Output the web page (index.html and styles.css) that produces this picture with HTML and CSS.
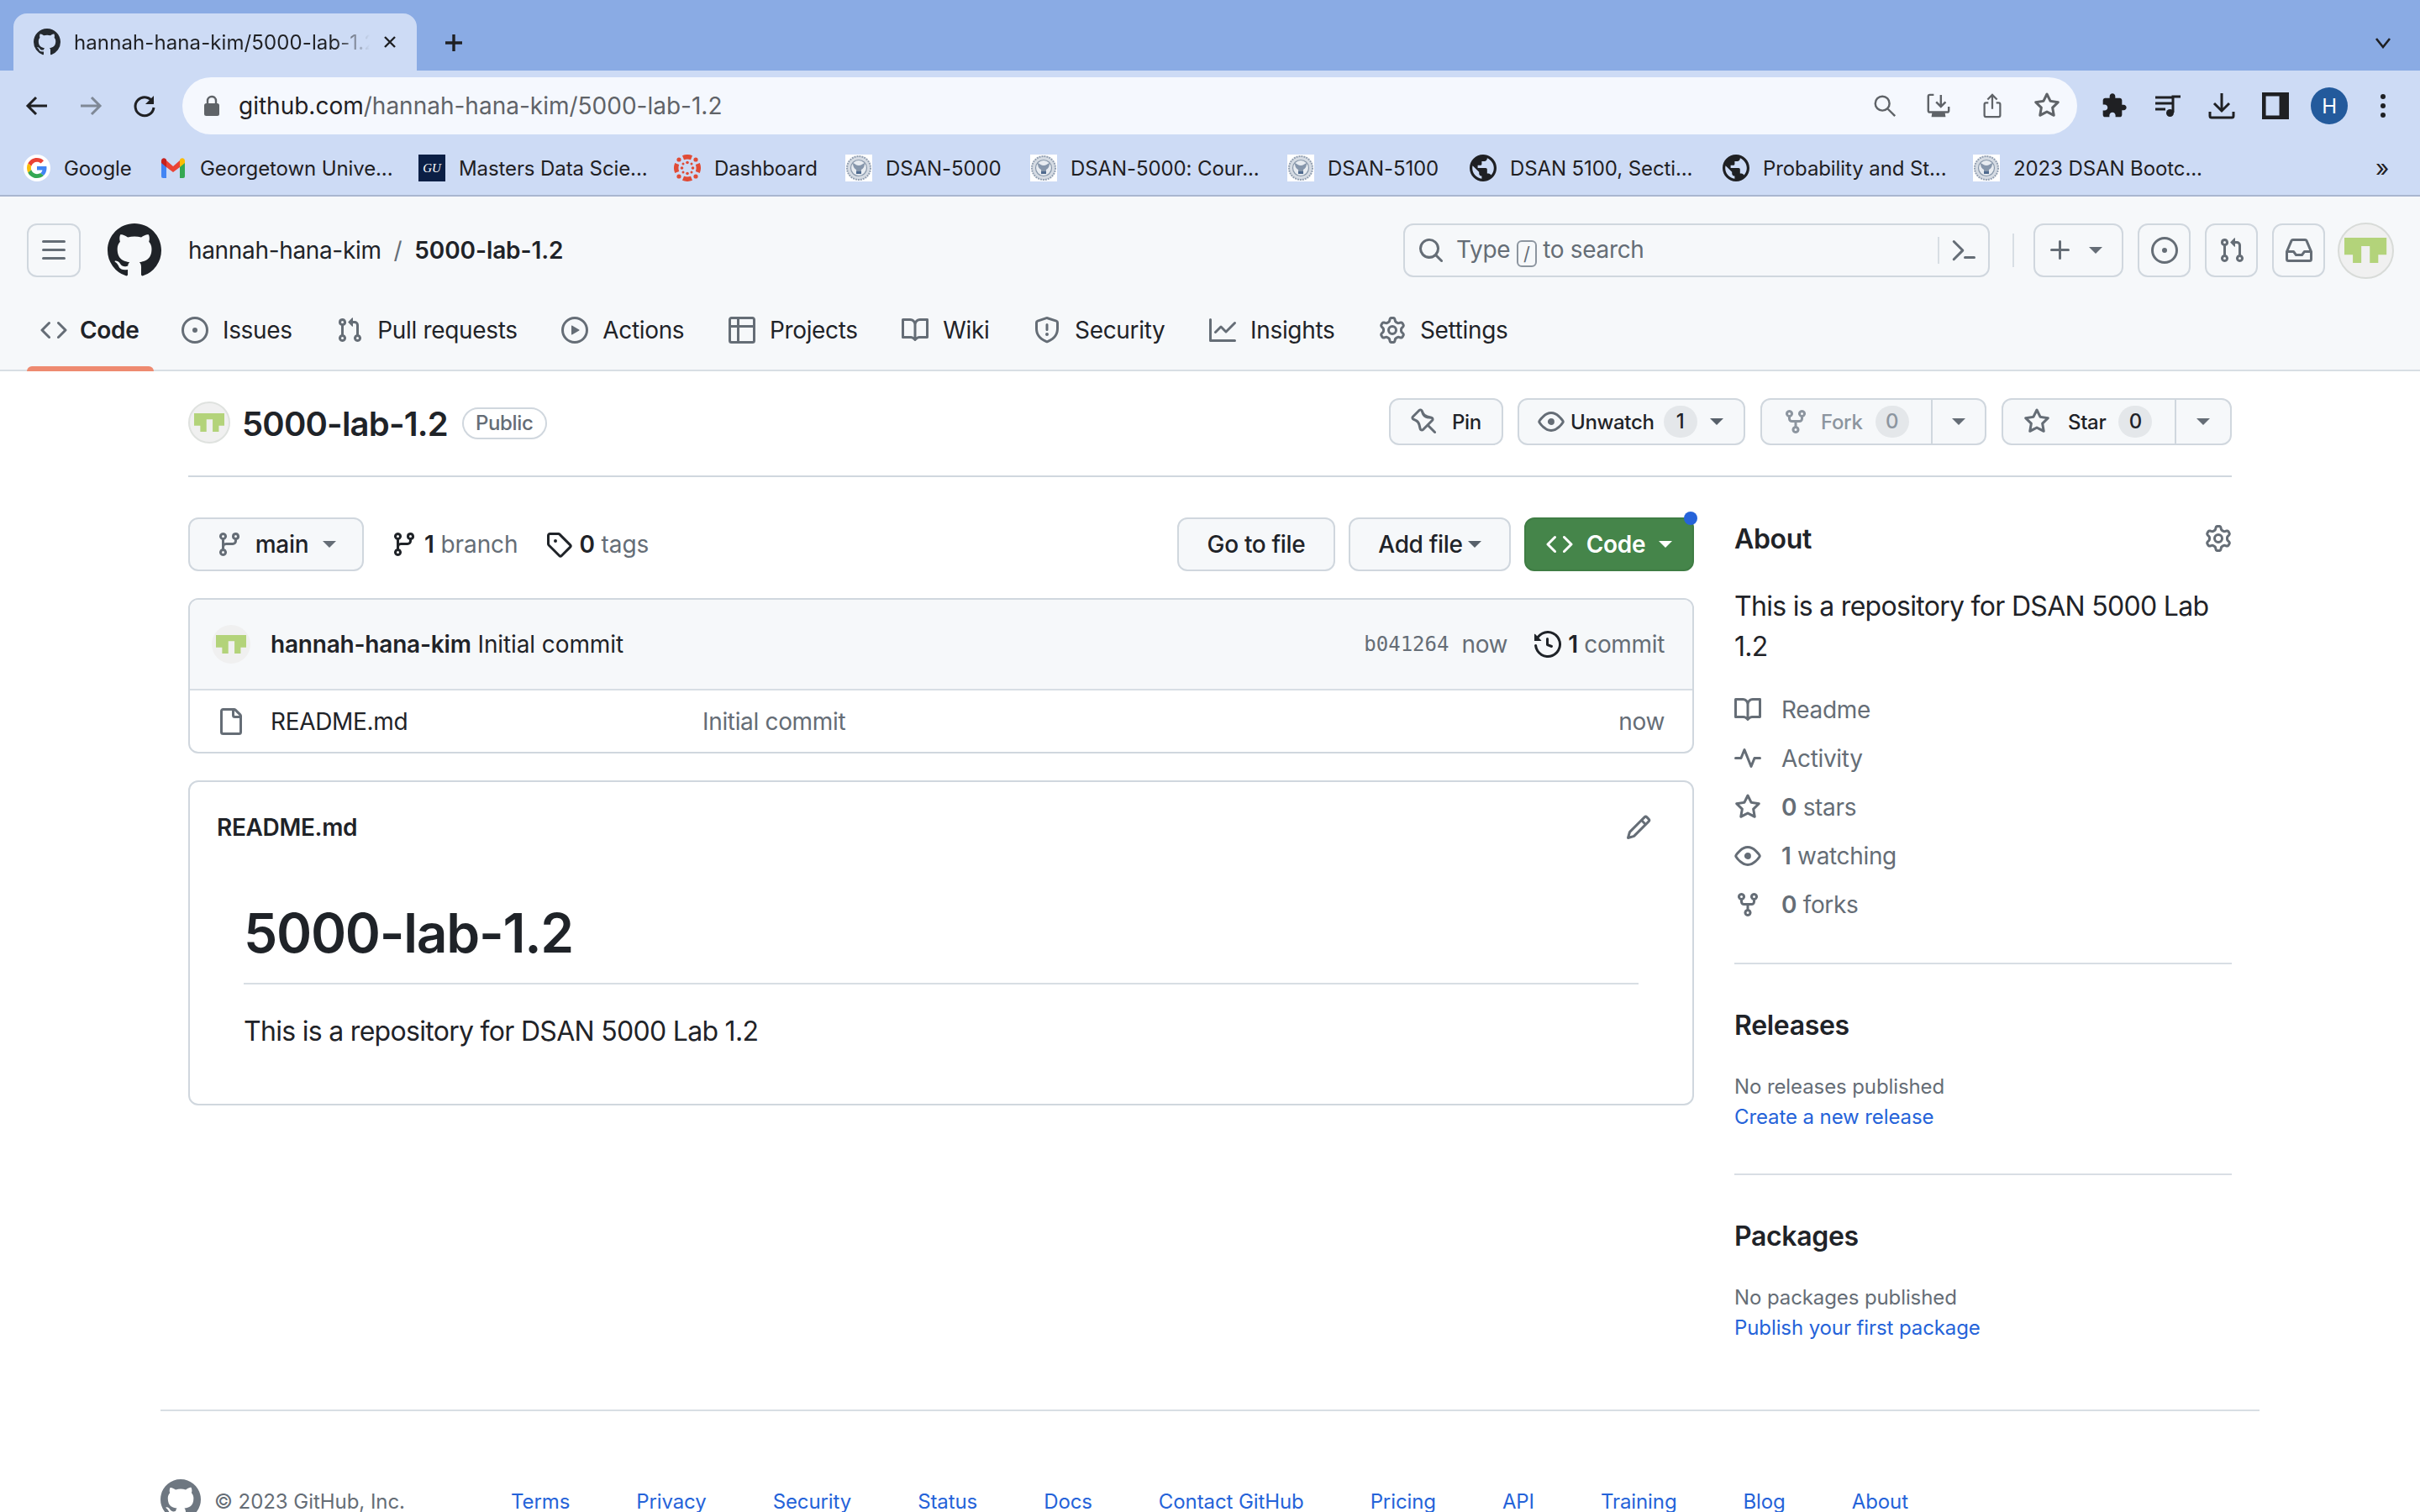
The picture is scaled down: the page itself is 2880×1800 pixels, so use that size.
FILE: index.html
```html
<!DOCTYPE html>
<html lang="en">
<head>
    <meta charset="UTF-8">
    <title>hannah-hana-kim/5000-lab-1.2</title>
    <link rel="stylesheet" href="styles.css">
</head>
<body>
    <svg class="sprite" xmlns="http://www.w3.org/2000/svg">
        <symbol id="i-mark" viewBox="0 0 16 16"><path d="M8 0c4.42 0 8 3.58 8 8a8.013 8.013 0 0 1-5.45 7.59c-.4.08-.55-.17-.55-.38 0-.27.01-1.13.01-2.2 0-.75-.25-1.23-.54-1.48 1.78-.2 3.65-.88 3.65-3.95 0-.88-.31-1.59-.82-2.15.08-.2.36-1.02-.08-2.12 0 0-.67-.22-2.2.82-.64-.18-1.32-.27-2-.27-.68 0-1.36.09-2 .27-1.53-1.03-2.2-.82-2.2-.82-.44 1.1-.16 1.92-.08 2.12-.51.56-.82 1.28-.82 2.15 0 3.06 1.86 3.75 3.64 3.95-.23.2-.44.55-.51 1.07-.46.21-1.61.55-2.33-.66-.15-.24-.6-.83-1.23-.82-.67.01-.27.38.01.53.34.19.73.9.82 1.13.16.45.68 1.31 2.69.94 0 .67.01 1.3.01 1.49 0 .21-.15.45-.55.38A7.995 7.995 0 0 1 0 8c0-4.42 3.58-8 8-8Z"/></symbol>
        <symbol id="i-bars" viewBox="0 0 16 16"><path d="M1 2.75A.75.75 0 0 1 1.75 2h12.5a.75.75 0 0 1 0 1.5H1.75A.75.75 0 0 1 1 2.75Zm0 5A.75.75 0 0 1 1.75 7h12.5a.75.75 0 0 1 0 1.5H1.75A.75.75 0 0 1 1 7.75ZM1.75 12h12.5a.75.75 0 0 1 0 1.5H1.75a.75.75 0 0 1 0-1.5Z"/></symbol>
        <symbol id="i-code" viewBox="0 0 16 16"><path d="m11.28 3.22 4.25 4.25a.75.75 0 0 1 0 1.06l-4.25 4.25a.749.749 0 0 1-1.275-.326.749.749 0 0 1 .215-.734L13.94 8l-3.72-3.72a.749.749 0 0 1 .326-1.275.749.749 0 0 1 .734.215Zm-6.56 0a.751.751 0 0 1 1.042.018.751.751 0 0 1 .018 1.042L2.06 8l3.72 3.72a.749.749 0 0 1-.326 1.275.749.749 0 0 1-.734-.215L.47 8.53a.75.75 0 0 1 0-1.06Z"/></symbol>
        <symbol id="i-issue" viewBox="0 0 16 16"><path d="M8 9.5a1.5 1.5 0 1 0 0-3 1.5 1.5 0 0 0 0 3Z"/><path d="M8 0a8 8 0 1 1 0 16A8 8 0 0 1 8 0ZM1.5 8a6.5 6.5 0 1 0 13 0 6.5 6.5 0 0 0-13 0Z"/></symbol>
        <symbol id="i-pr" viewBox="0 0 16 16"><path d="M1.5 3.25a2.25 2.25 0 1 1 3 2.122v5.256a2.251 2.251 0 1 1-1.5 0V5.372A2.25 2.25 0 0 1 1.5 3.25Zm5.677-.177L9.573.677A.25.25 0 0 1 10 .854V2.5h1A2.5 2.5 0 0 1 13.5 5v5.628a2.251 2.251 0 1 1-1.5 0V5a1 1 0 0 0-1-1h-1v1.646a.25.25 0 0 1-.427.177L7.177 3.427a.25.25 0 0 1 0-.354ZM3.75 2.5a.75.75 0 1 0 0 1.5.75.75 0 0 0 0-1.5Zm0 9.5a.75.75 0 1 0 0 1.5.75.75 0 0 0 0-1.5Zm8.25.75a.75.75 0 1 0 1.5 0 .75.75 0 0 0-1.5 0Z"/></symbol>
        <symbol id="i-play" viewBox="0 0 16 16"><path d="M8 0a8 8 0 1 1 0 16A8 8 0 0 1 8 0ZM1.5 8a6.5 6.5 0 1 0 13 0 6.5 6.5 0 0 0-13 0Zm4.879-2.773 4.264 2.559a.25.25 0 0 1 0 .428l-4.264 2.559A.25.25 0 0 1 6 10.559V5.442a.25.25 0 0 1 .379-.215Z"/></symbol>
        <symbol id="i-table" viewBox="0 0 16 16"><path d="M0 1.75C0 .784.784 0 1.75 0h12.5C15.216 0 16 .784 16 1.75v12.5A1.75 1.75 0 0 1 14.25 16H1.75A1.75 1.75 0 0 1 0 14.25ZM6.5 6.5v8h7.75a.25.25 0 0 0 .25-.25V6.5Zm8-1.5V1.75a.25.25 0 0 0-.25-.25H6.5V5Zm-13 1.5v7.75c0 .138.112.25.25.25H5v-8ZM5 5V1.5H1.75a.25.25 0 0 0-.25.25V5Z"/></symbol>
        <symbol id="i-book" viewBox="0 0 16 16"><path d="M0 1.75A.75.75 0 0 1 .75 1h4.253c1.227 0 2.317.59 3 1.501A3.743 3.743 0 0 1 11.006 1h4.245a.75.75 0 0 1 .75.75v10.5a.75.75 0 0 1-.75.75h-4.507a2.25 2.25 0 0 0-1.591.659l-.622.621a.75.75 0 0 1-1.06 0l-.622-.621A2.25 2.25 0 0 0 5.258 13H.75a.75.75 0 0 1-.75-.75Zm7.251 10.324.004-5.073-.002-2.253A2.25 2.25 0 0 0 5.003 2.5H1.5v9h3.757a3.75 3.75 0 0 1 1.994.574ZM8.755 4.75l-.004 7.322a3.752 3.752 0 0 1 1.992-.572H14.5v-9h-3.495a2.25 2.25 0 0 0-2.25 2.25Z"/></symbol>
        <symbol id="i-shield" viewBox="0 0 16 16"><path d="M7.467.133a1.748 1.748 0 0 1 1.066 0l5.25 1.68A1.75 1.75 0 0 1 15 3.48V7c0 1.566-.32 3.182-1.303 4.682-.983 1.498-2.585 2.813-5.032 3.855a1.697 1.697 0 0 1-1.33 0c-2.447-1.042-4.049-2.357-5.032-3.855C1.32 10.182 1 8.566 1 7V3.48a1.75 1.75 0 0 1 1.217-1.667Zm.61 1.429a.25.25 0 0 0-.153 0l-5.25 1.68a.25.25 0 0 0-.174.238V7c0 1.358.275 2.666 1.057 3.86.784 1.194 2.121 2.34 4.366 3.297a.196.196 0 0 0 .154 0c2.245-.956 3.582-2.104 4.366-3.298C13.225 9.666 13.5 8.36 13.5 7V3.48a.251.251 0 0 0-.174-.237l-5.25-1.68ZM8.75 4.75v3a.75.75 0 0 1-1.5 0v-3a.75.75 0 0 1 1.5 0ZM9 10.5a1 1 0 1 1-2 0 1 1 0 0 1 2 0Z"/></symbol>
        <symbol id="i-graph" viewBox="0 0 16 16"><path d="M1.5 1.75V13.5h13.75a.75.75 0 0 1 0 1.5H.75a.75.75 0 0 1-.75-.75V1.75a.75.75 0 0 1 1.5 0Zm14.28 2.53-5.25 5.25a.75.75 0 0 1-1.06 0L7 7.06 4.28 9.78a.751.751 0 0 1-1.042-.018.751.751 0 0 1-.018-1.042l3.25-3.25a.75.75 0 0 1 1.06 0L10 7.94l4.72-4.72a.751.751 0 0 1 1.042.018.751.751 0 0 1 .018 1.042Z"/></symbol>
        <symbol id="i-gear" viewBox="0 0 16 16"><path d="M8 0a8.2 8.2 0 0 1 .701.031C9.444.095 9.99.645 10.16 1.29l.288 1.107c.018.066.079.158.212.224.231.114.454.243.668.386.123.082.233.09.299.071l1.103-.303c.644-.176 1.392.021 1.82.63.27.385.506.792.704 1.218.315.675.111 1.422-.364 1.891l-.814.806c-.049.048-.098.147-.088.294.016.257.016.515 0 .772-.01.147.038.246.088.294l.814.806c.475.469.679 1.216.364 1.891a7.977 7.977 0 0 1-.704 1.217c-.428.61-1.176.807-1.82.63l-1.102-.302c-.067-.019-.177-.011-.3.071a5.909 5.909 0 0 1-.668.386c-.133.066-.194.158-.211.224l-.29 1.106c-.168.646-.715 1.196-1.458 1.26a8.006 8.006 0 0 1-1.402 0c-.743-.064-1.289-.614-1.458-1.26l-.289-1.106c-.018-.066-.079-.158-.212-.224a5.738 5.738 0 0 1-.668-.386c-.123-.082-.233-.09-.299-.071l-1.103.303c-.644.176-1.392-.021-1.82-.63a8.12 8.12 0 0 1-.704-1.218c-.315-.675-.111-1.422.363-1.891l.815-.806c.05-.048.098-.147.088-.294a6.214 6.214 0 0 1 0-.772c.01-.147-.038-.246-.088-.294l-.815-.806C.635 6.045.431 5.298.746 4.623a7.92 7.92 0 0 1 .704-1.217c.428-.61 1.176-.807 1.82-.63l1.102.302c.067.019.177.011.3-.071.214-.143.437-.272.668-.386.133-.066.194-.158.211-.224l.29-1.106C6.009.645 6.556.095 7.299.03 7.53.01 7.764 0 8 0Zm-.571 1.525c-.036.003-.108.036-.137.146l-.289 1.105c-.147.561-.549.967-.998 1.189-.173.086-.34.183-.5.29-.417.278-.97.423-1.529.27l-1.103-.303c-.109-.03-.175.016-.195.045-.22.312-.412.644-.573.99-.014.031-.021.11.059.19l.815.806c.411.406.562.957.53 1.456a4.709 4.709 0 0 0 0 .582c.032.499-.119 1.05-.53 1.456l-.815.806c-.081.08-.073.159-.059.19.162.346.353.677.573.989.02.03.085.076.195.046l1.102-.303c.56-.153 1.113-.008 1.53.27.161.107.328.204.501.29.447.222.85.629.997 1.189l.289 1.105c.029.109.101.143.137.146a6.6 6.6 0 0 0 1.142 0c.036-.003.108-.036.137-.146l.289-1.105c.147-.561.549-.967.998-1.189.173-.086.34-.183.5-.29.417-.278.97-.423 1.529-.27l1.103.303c.109.029.175-.016.195-.045.22-.313.411-.644.573-.99.014-.031.021-.11-.059-.19l-.815-.806c-.411-.406-.562-.957-.53-1.456a4.709 4.709 0 0 0 0-.582c-.032-.499.119-1.05.53-1.456l.815-.806c.081-.08.073-.159.059-.19a6.464 6.464 0 0 0-.573-.989c-.02-.03-.085-.076-.195-.046l-1.102.303c-.56.153-1.113.008-1.53-.27a4.44 4.44 0 0 0-.501-.29c-.447-.222-.85-.629-.997-1.189l-.289-1.105c-.029-.11-.101-.143-.137-.146a6.6 6.6 0 0 0-1.142 0ZM11 8a3 3 0 1 1-6 0 3 3 0 0 1 6 0ZM9.5 8a1.5 1.5 0 1 0-3.001.001A1.5 1.5 0 0 0 9.5 8Z"/></symbol>
        <symbol id="i-search" viewBox="0 0 16 16"><path d="M10.68 11.74a6 6 0 0 1-7.922-8.982 6 6 0 0 1 8.982 7.922l3.04 3.04a.749.749 0 0 1-.326 1.275.749.749 0 0 1-.734-.215ZM11.5 7a4.499 4.499 0 1 0-8.997 0A4.499 4.499 0 0 0 11.5 7Z"/></symbol>
        <symbol id="i-term" viewBox="0 0 16 16"><path d="m6.354 8.04-4.773 4.773a.75.75 0 1 0 1.061 1.06L7.945 8.57a.75.75 0 0 0 0-1.06L2.642 2.206a.75.75 0 0 0-1.06 1.061L6.353 8.04ZM8.75 11.5a.75.75 0 0 0 0 1.5h5.5a.75.75 0 0 0 0-1.5h-5.5Z"/></symbol>
        <symbol id="i-plus" viewBox="0 0 16 16"><path d="M7.75 2a.75.75 0 0 1 .75.75V7h4.25a.75.75 0 0 1 0 1.5H8.5v4.25a.75.75 0 0 1-1.5 0V8.5H2.75a.75.75 0 0 1 0-1.5H7V2.75A.75.75 0 0 1 7.75 2Z"/></symbol>
        <symbol id="i-inbox" viewBox="0 0 16 16"><path d="M2.8 2.06A1.75 1.75 0 0 1 4.41 1h7.18c.7 0 1.333.417 1.61 1.06l2.74 6.395c.04.093.06.194.06.295v4.5A1.75 1.75 0 0 1 14.25 15H1.75A1.75 1.75 0 0 1 0 13.25v-4.5c0-.101.02-.202.06-.295Zm1.61.44a.25.25 0 0 0-.23.152L1.887 8H4.75a.75.75 0 0 1 .6.3L6.625 10h2.75l1.275-1.7a.75.75 0 0 1 .6-.3h2.863L11.82 2.652a.25.25 0 0 0-.23-.152Zm10.09 7h-2.875l-1.275 1.7a.75.75 0 0 1-.6.3h-3.5a.75.75 0 0 1-.6-.3L4.375 9.5H1.5v3.75c0 .138.112.25.25.25h12.5a.25.25 0 0 0 .25-.25Z"/></symbol>
        <symbol id="i-pin" viewBox="0 0 16 16"><path d="M4.456.734a1.75 1.75 0 0 1 2.826.504l.613 1.327a3.081 3.081 0 0 0 2.084 1.707l2.454.584c1.332.317 1.8 1.972.832 2.94L11.06 10l3.72 3.72a.748.748 0 0 1-.332 1.265.75.75 0 0 1-.728-.205L10 11.06l-2.204 2.205c-.968.968-2.623.5-2.94-.832l-.584-2.454a3.081 3.081 0 0 0-1.707-2.084l-1.327-.613a1.75 1.75 0 0 1-.504-2.826L4.456.734ZM5.92 1.866a.25.25 0 0 0-.404-.072L1.794 5.516a.25.25 0 0 0 .072.404l1.328.613A4.582 4.582 0 0 1 5.73 9.63l.584 2.454a.25.25 0 0 0 .42.12l5.47-5.47a.25.25 0 0 0-.12-.42L9.63 6.13a4.583 4.583 0 0 1-3.098-2.537L5.92 1.866Z"/></symbol>
        <symbol id="i-eye" viewBox="0 0 16 16"><path d="M8 2c1.981 0 3.671.992 4.933 2.078 1.27 1.091 2.187 2.345 2.637 3.023a1.62 1.62 0 0 1 0 1.798c-.45.678-1.367 1.932-2.637 3.023C11.67 13.008 9.981 14 8 14c-1.981 0-3.671-.992-4.933-2.078C1.797 10.83.88 9.576.43 8.898a1.62 1.62 0 0 1 0-1.798c.45-.677 1.367-1.931 2.637-3.022C4.33 2.992 6.019 2 8 2ZM1.679 7.932a.12.12 0 0 0 0 .136c.411.622 1.241 1.75 2.366 2.717C5.176 11.758 6.527 12.5 8 12.5c1.473 0 2.825-.742 3.955-1.715 1.124-.967 1.954-2.096 2.366-2.717a.12.12 0 0 0 0-.136c-.412-.621-1.242-1.75-2.366-2.717C10.824 4.242 9.473 3.5 8 3.5c-1.473 0-2.825.742-3.955 1.715-1.124.967-1.954 2.096-2.366 2.717ZM8 10a2 2 0 1 1-.001-3.999A2 2 0 0 1 8 10Z"/></symbol>
        <symbol id="i-fork" viewBox="0 0 16 16"><path d="M5 5.372v.878c0 .414.336.75.75.75h4.5a.75.75 0 0 0 .75-.75v-.878a2.25 2.25 0 1 1 1.5 0v.878a2.25 2.25 0 0 1-2.25 2.25h-1.5v2.128a2.251 2.251 0 1 1-1.5 0V8.5h-1.5A2.25 2.25 0 0 1 3.5 6.25v-.878a2.25 2.25 0 1 1 1.5 0ZM5 3.25a.75.75 0 1 0-1.5 0 .75.75 0 0 0 1.5 0Zm6.75.75a.75.75 0 1 0 0-1.5.75.75 0 0 0 0 1.5Zm-3 8.75a.75.75 0 1 0-1.5 0 .75.75 0 0 0 1.5 0Z"/></symbol>
        <symbol id="i-star" viewBox="0 0 16 16"><path d="M8 .25a.75.75 0 0 1 .673.418l1.882 3.815 4.21.612a.75.75 0 0 1 .416 1.279l-3.046 2.97.719 4.192a.751.751 0 0 1-1.088.791L8 12.347l-3.766 1.98a.75.75 0 0 1-1.088-.79l.72-4.194L.818 6.374a.75.75 0 0 1 .416-1.28l4.21-.611L7.327.668A.75.75 0 0 1 8 .25Zm0 2.445L6.615 5.5a.75.75 0 0 1-.564.41l-3.097.45 2.24 2.184a.75.75 0 0 1 .216.664l-.528 3.084 2.769-1.456a.75.75 0 0 1 .698 0l2.77 1.456-.53-3.084a.75.75 0 0 1 .216-.664l2.24-2.183-3.096-.45a.75.75 0 0 1-.564-.41L8 2.694Z"/></symbol>
        <symbol id="i-branch" viewBox="0 0 16 16"><path d="M9.5 3.25a2.25 2.25 0 1 1 3 2.122V6A2.5 2.5 0 0 1 10 8.5H6a1 1 0 0 0-1 1v1.128a2.251 2.251 0 1 1-1.5 0V5.372a2.25 2.25 0 1 1 1.5 0v1.836A2.493 2.493 0 0 1 6 7h4a1 1 0 0 0 1-1v-.628A2.25 2.25 0 0 1 9.5 3.25Zm-6 0a.75.75 0 1 0 1.5 0 .75.75 0 0 0-1.5 0Zm8.25-.75a.75.75 0 1 0 0 1.5.75.75 0 0 0 0-1.5ZM4.25 12a.75.75 0 1 0 0 1.5.75.75 0 0 0 0-1.5Z"/></symbol>
        <symbol id="i-tag" viewBox="0 0 16 16"><path d="M1 7.775V2.75C1 1.784 1.784 1 2.75 1h5.025c.464 0 .91.184 1.238.513l6.25 6.25a1.75 1.75 0 0 1 0 2.474l-5.026 5.026a1.75 1.75 0 0 1-2.474 0l-6.25-6.25A1.752 1.752 0 0 1 1 7.775Zm1.5 0c0 .066.026.13.073.177l6.25 6.25a.25.25 0 0 0 .354 0l5.025-5.025a.25.25 0 0 0 0-.354l-6.25-6.25a.25.25 0 0 0-.177-.073H2.75a.25.25 0 0 0-.25.25ZM6 5a1 1 0 1 1 0 2 1 1 0 0 1 0-2Z"/></symbol>
        <symbol id="i-history" viewBox="0 0 16 16"><path d="m.427 1.927 1.215 1.215a8.002 8.002 0 1 1-1.6 5.685.75.75 0 1 1 1.493-.154 6.5 6.5 0 1 0 1.18-4.458l1.358 1.358A.25.25 0 0 1 3.896 6H.25A.25.25 0 0 1 0 5.75V2.104a.25.25 0 0 1 .427-.177ZM7.75 4a.75.75 0 0 1 .75.75v2.992l2.028.812a.75.75 0 0 1-.557 1.392l-2.5-1A.751.751 0 0 1 7 8.25v-3.5A.75.75 0 0 1 7.75 4Z"/></symbol>
        <symbol id="i-file" viewBox="0 0 16 16"><path d="M2 1.75C2 .784 2.784 0 3.75 0h6.586c.464 0 .909.184 1.237.513l2.914 2.914c.329.328.513.773.513 1.237v9.586A1.75 1.75 0 0 1 13.25 16h-9.5A1.75 1.75 0 0 1 2 14.25Zm1.75-.25a.25.25 0 0 0-.25.25v12.5c0 .138.112.25.25.25h9.5a.25.25 0 0 0 .25-.25V6h-2.75A1.75 1.75 0 0 1 9 4.25V1.5Zm6.75.062V4.25c0 .138.112.25.25.25h2.688l-.011-.013-2.914-2.914-.013-.011Z"/></symbol>
        <symbol id="i-pencil" viewBox="0 0 16 16"><path d="M11.013 1.427a1.75 1.75 0 0 1 2.474 0l1.086 1.086a1.75 1.75 0 0 1 0 2.474l-8.61 8.61c-.21.21-.47.364-.756.445l-3.251.93a.75.75 0 0 1-.927-.928l.929-3.25c.081-.286.235-.547.445-.758l8.61-8.61Zm.176 4.823L9.75 4.81l-6.286 6.287a.253.253 0 0 0-.064.108l-.558 1.953 1.953-.558a.253.253 0 0 0 .108-.064Zm1.238-3.763a.25.25 0 0 0-.354 0L10.811 3.75l1.439 1.44 1.263-1.263a.25.25 0 0 0 0-.354Z"/></symbol>
        <symbol id="i-pulse" viewBox="0 0 16 16"><path d="M6 2c.306 0 .582.187.696.471L10 10.731l1.304-3.26A.751.751 0 0 1 12 7h3.25a.75.75 0 0 1 0 1.5h-2.742l-1.812 4.528a.751.751 0 0 1-1.392 0L6 4.77 4.696 8.03A.75.75 0 0 1 4 8.5H.75a.75.75 0 0 1 0-1.5h2.742l1.812-4.529A.751.751 0 0 1 6 2Z"/></symbol>

        <symbol id="i-globe" viewBox="2 2 20 20"><path d="M12 2C6.48 2 2 6.48 2 12s4.48 10 10 10 10-4.48 10-10S17.52 2 12 2zm-1 17.93c-3.95-.49-7-3.85-7-7.93 0-.62.08-1.21.21-1.79L9 15v1c0 1.1.9 2 2 2v1.93zm6.9-2.54c-.26-.81-1-1.39-1.9-1.39h-1v-3c0-.55-.45-1-1-1H8v-2h2c.55 0 1-.45 1-1V7h2c1.1 0 2-.9 2-2v-.41c2.93 1.19 5 4.06 5 7.41 0 2.08-.8 3.97-2.1 5.39z"/></symbol>
        <symbol id="i-seal" viewBox="0 0 32 32">
            <rect width="32" height="32" fill="#fff"/>
            <circle cx="16" cy="16" r="14" fill="#d5dbe3" stroke="#93a0b2" stroke-width="2" stroke-dasharray="2 1"/>
            <circle cx="16" cy="16" r="9.5" fill="#e8ecf1" stroke="#8998ab" stroke-width="1.2"/>
            <path d="M9 10c3 1 4 3 7 3s4-2 7-3c0 5-2 7-4 8v4h-6v-4c-2-1-4-3-4-8Z" fill="#8696ab"/>
            <rect x="13" y="20" width="6" height="3" fill="#4f6a8e"/>
        </symbol>
        <symbol id="i-canvas" viewBox="0 0 32 32">
            <g fill="#e04b36">
                <path d="M10 1.2a16 16 0 0 1 12 0l-2 5a11 11 0 0 0-8 0Z"/>
                <path d="M10 30.8a16 16 0 0 0 12 0l-2-5a11 11 0 0 1-8 0Z"/>
                <path d="M1.2 10a16 16 0 0 0 0 12l5-2a11 11 0 0 1 0-8Z"/>
                <path d="M30.8 10a16 16 0 0 1 0 12l-5-2a11 11 0 0 0 0-8Z"/>
                <circle cx="16" cy="9.5" r="1.8"/><circle cx="16" cy="22.5" r="1.8"/><circle cx="9.5" cy="16" r="1.8"/><circle cx="22.5" cy="16" r="1.8"/>
                <circle cx="6" cy="6" r="2.6"/><circle cx="26" cy="6" r="2.6"/><circle cx="6" cy="26" r="2.6"/><circle cx="26" cy="26" r="2.6"/>
                <circle cx="11" cy="11" r="1.5"/><circle cx="21" cy="11" r="1.5"/><circle cx="11" cy="21" r="1.5"/><circle cx="21" cy="21" r="1.5"/>
            </g>
        </symbol>
        <symbol id="i-ident" viewBox="0 0 5 3"><path d="M0 0H5V2H4V3H3V1H2V3H1V2H0Z"/></symbol>
    </svg>

    <!-- browser chrome -->
    <div class="tabstrip">
        <div class="tab">
            <svg class="ic tab-fav"><use href="#i-mark"/></svg>
            <span class="tab-title">hannah-hana-kim/5000-lab-1.2</span>
            <svg class="tab-close" viewBox="0 0 16 16"><path d="M2 2l12 12M14 2L2 14"/></svg>
        </div>
        <svg class="tab-new" viewBox="0 0 24 24"><path d="M12 2v20M2 12h20"/></svg>
        <svg class="tab-list" viewBox="0 0 20 14"><path d="M2 2l8 10 8-10"/></svg>
    </div>

    <div class="toolbar">
        <svg class="tool tool-stroke" viewBox="0 0 32 32"><path d="M28 16H6M15 6L5 16l10 10"/></svg>
        <svg class="tool tool-stroke tool-off" viewBox="0 0 32 32"><path d="M4 16h22M17 6l10 10-10 10"/></svg>
        <svg class="tool tool-stroke" viewBox="0 0 32 32"><path d="M26 12a11 11 0 1 0 1 6"/><path class="solid" d="M27 4v10H17Z"/></svg>
        <div class="omnibox">
            <svg class="lock" viewBox="0 0 20 26"><path d="M5 11V7a5 5 0 0 1 10 0v4" fill="none" stroke="#5f6368" stroke-width="2.4"/><rect x="1" y="10" width="18" height="15" rx="2.5" fill="#5f6368"/></svg>
            <span class="url"><span class="url-host">github.com</span>/hannah-hana-kim/5000-lab-1.2</span>
            <div class="omni-icons">
                <svg class="omni-ic" viewBox="0 0 32 32"><circle cx="13" cy="13" r="9" fill="none" stroke="#5f6368" stroke-width="2.6"/><path d="M20 20l9 9" stroke="#5f6368" stroke-width="2.6"/></svg>
                <svg class="omni-ic" viewBox="0 0 32 32"><path d="M10 2H5a2 2 0 0 0-2 2v18a2 2 0 0 0 2 2h22a2 2 0 0 0 2-2v-5" fill="none" stroke="#5f6368" stroke-width="2.6"/><path d="M19 2v14M13 11l6 6 6-6" fill="none" stroke="#5f6368" stroke-width="2.6"/><path d="M8 24h16l1 6H7Z" fill="#5f6368"/></svg>
                <svg class="omni-ic" viewBox="0 0 32 32"><path d="M11 12H8a2 2 0 0 0-2 2v14a2 2 0 0 0 2 2h16a2 2 0 0 0 2-2V14a2 2 0 0 0-2-2h-3M16 20V2M10 8l6-6 6 6" fill="none" stroke="#5f6368" stroke-width="2.4"/></svg>
                <svg class="ic omni-star"><use href="#i-star"/></svg>
            </div>
        </div>
        <div class="tool-right">
            <svg class="tool tool-solid" viewBox="0 0 24 24"><path d="M20.5 11H19V7c0-1.1-.9-2-2-2h-4V3.5C13 2.12 11.88 1 10.5 1S8 2.12 8 3.5V5H4c-1.1 0-1.99.9-1.99 2v3.8H3.5c1.49 0 2.7 1.21 2.7 2.7s-1.21 2.7-2.7 2.7H2V20c0 1.1.9 2 2 2h3.8v-1.5c0-1.49 1.21-2.7 2.7-2.7 1.49 0 2.7 1.21 2.7 2.7V22H17c1.1 0 2-.9 2-2v-4h1.5c1.38 0 2.5-1.12 2.5-2.5S21.88 11 20.5 11z"/></svg>
            <svg class="tool tool-stroke" viewBox="0 0 32 32"><path d="M1 6h20M1 13h20M1 20h12M22 24V5h9"/><circle class="solid" cx="18.5" cy="24.5" r="4.5"/></svg>
            <svg class="tool tool-stroke" viewBox="0 0 32 32"><path d="M16 1v20M7 13l9 9 9-9M2 23v5a2 2 0 0 0 2 2h24a2 2 0 0 0 2-2v-5"/></svg>
            <svg class="tool tool-solid" viewBox="0 0 28 28"><path fill-rule="evenodd" d="M0 0h28v28H0ZM4 4v20h14V4Z"/></svg>
            <span class="profile">H</span>
            <svg class="tool tool-solid" viewBox="0 0 32 32"><circle cx="16" cy="5" r="3"/><circle cx="16" cy="16" r="3"/><circle cx="16" cy="27" r="3"/></svg>
        </div>
    </div>

    <div class="bookmarks">
        <div class="bm">
            <span class="g-badge"><svg class="g-logo" viewBox="0 0 48 48"><path fill="#EA4335" d="M24 9.5c3.54 0 6.71 1.22 9.21 3.6l6.85-6.85C35.9 2.38 30.47 0 24 0 14.62 0 6.51 5.38 2.56 13.22l7.98 6.19C12.43 13.72 17.74 9.5 24 9.5z"/><path fill="#4285F4" d="M46.98 24.55c0-1.57-.15-3.09-.38-4.55H24v9.02h12.94c-.58 2.96-2.26 5.48-4.78 7.18l7.73 6c4.51-4.18 7.09-10.36 7.09-17.65z"/><path fill="#FBBC05" d="M10.53 28.59c-.48-1.45-.76-2.99-.76-4.59s.27-3.14.76-4.59l-7.98-6.19C.92 16.46 0 20.12 0 24c0 3.88.92 7.54 2.56 10.78l7.97-6.19z"/><path fill="#34A853" d="M24 48c6.48 0 11.93-2.13 15.89-5.81l-7.73-6c-2.15 1.45-4.92 2.3-8.16 2.3-6.26 0-11.57-4.22-13.47-9.91l-7.98 6.19C6.51 42.62 14.62 48 24 48z"/></svg></span>
            <span>Google</span>
        </div>
        <div class="bm">
            <svg class="fav fav-gmail" viewBox="2 4 28 24"><path fill="#4285f4" d="M2 7h6v21H4a2 2 0 0 1-2-2Z"/><path fill="#34a853" d="M24 7h6v19a2 2 0 0 1-2 2h-4Z"/><path fill="#ea4335" d="M8 7l8 7 8-7v8l-8 6-8-6Z"/><path fill="#c5221f" d="M2 7a3 3 0 0 1 5-2l1 1v9L2 10Z"/><path fill="#fbbc04" d="M30 7a3 3 0 0 0-5-2l-1 1v9l6-5Z"/></svg>
            <span>Georgetown Unive...</span>
        </div>
        <div class="bm">
            <span class="gu">GU</span>
            <span>Masters Data Scie...</span>
        </div>
        <div class="bm"><svg class="fav"><use href="#i-canvas"/></svg><span>Dashboard</span></div>
        <div class="bm"><svg class="fav"><use href="#i-seal"/></svg><span>DSAN-5000</span></div>
        <div class="bm"><svg class="fav"><use href="#i-seal"/></svg><span>DSAN-5000: Cour...</span></div>
        <div class="bm"><svg class="fav"><use href="#i-seal"/></svg><span>DSAN-5100</span></div>
        <div class="bm"><svg class="fav fav-globe"><use href="#i-globe"/></svg><span>DSAN 5100, Secti...</span></div>
        <div class="bm"><svg class="fav fav-globe"><use href="#i-globe"/></svg><span>Probability and St...</span></div>
        <div class="bm"><svg class="fav"><use href="#i-seal"/></svg><span>2023 DSAN Bootc...</span></div>
        <div class="bm-more">»</div>
    </div>

    <!-- github header -->
    <header class="app-header">
        <div class="head-row">
            <button class="icon-btn icon-btn-menu"><svg class="ic ic-muted"><use href="#i-bars"/></svg></button>
            <svg class="ic head-logo"><use href="#i-mark"/></svg>
            <div class="crumbs">
                <span>hannah-hana-kim</span>
                <span class="crumb-sep">/</span>
                <strong>5000-lab-1.2</strong>
            </div>
            <div class="search">
                <svg class="ic ic-muted"><use href="#i-search"/></svg>
                <span class="search-text">Type <kbd class="slash">/</kbd> to search</span>
                <span class="search-term"><svg class="ic ic-muted"><use href="#i-term"/></svg></span>
            </div>
            <span class="head-div"></span>
            <button class="icon-btn icon-btn-wide"><svg class="ic ic-muted"><use href="#i-plus"/></svg><span class="caret"></span></button>
            <button class="icon-btn"><svg class="ic ic-muted"><use href="#i-issue"/></svg></button>
            <button class="icon-btn"><svg class="ic ic-muted"><use href="#i-pr"/></svg></button>
            <button class="icon-btn"><svg class="ic ic-muted"><use href="#i-inbox"/></svg></button>
            <span class="avatar avatar-head"><svg class="identicon"><use href="#i-ident"/></svg></span>
        </div>
        <nav class="tabs">
            <a class="navtab active"><svg class="ic ic-muted"><use href="#i-code"/></svg>Code</a>
            <a class="navtab"><svg class="ic ic-muted"><use href="#i-issue"/></svg>Issues</a>
            <a class="navtab"><svg class="ic ic-muted"><use href="#i-pr"/></svg>Pull requests</a>
            <a class="navtab"><svg class="ic ic-muted"><use href="#i-play"/></svg>Actions</a>
            <a class="navtab"><svg class="ic ic-muted"><use href="#i-table"/></svg>Projects</a>
            <a class="navtab"><svg class="ic ic-muted"><use href="#i-book"/></svg>Wiki</a>
            <a class="navtab"><svg class="ic ic-muted"><use href="#i-shield"/></svg>Security</a>
            <a class="navtab"><svg class="ic ic-muted"><use href="#i-graph"/></svg>Insights</a>
            <a class="navtab"><svg class="ic ic-muted"><use href="#i-gear"/></svg>Settings</a>
        </nav>
    </header>

    <div class="page">
        <div class="repo-head">
            <span class="avatar avatar-repo"><svg class="identicon"><use href="#i-ident"/></svg></span>
            <h2 class="repo-name">5000-lab-1.2</h2>
            <span class="badge">Public</span>
            <div class="repo-actions">
                <button class="sbtn sbtn-pin"><svg class="ic ic-muted"><use href="#i-pin"/></svg><span>Pin</span></button>
                <button class="sbtn sbtn-watch"><svg class="ic ic-muted"><use href="#i-eye"/></svg><span>Unwatch</span><span class="count">1</span><span class="caret caret-dark"></span></button>
                <div class="split split-fork">
                    <button class="sbtn sbtn-main disabled"><svg class="ic"><use href="#i-fork"/></svg><span>Fork</span><span class="count">0</span></button>
                    <button class="sbtn sbtn-drop"><span class="caret"></span></button>
                </div>
                <div class="split split-star">
                    <button class="sbtn sbtn-main"><svg class="ic ic-muted"><use href="#i-star"/></svg><span>Star</span><span class="count">0</span></button>
                    <button class="sbtn sbtn-drop"><span class="caret"></span></button>
                </div>
            </div>
        </div>

        <div class="layout">
            <main class="main-col">
                <div class="file-nav">
                    <button class="btn btn-branch"><svg class="ic ic-muted"><use href="#i-branch"/></svg><span>main</span><span class="caret"></span></button>
                    <a class="meta meta-branch"><svg class="ic"><use href="#i-branch"/></svg><span><b>1</b> branch</span></a>
                    <a class="meta meta-tags"><svg class="ic"><use href="#i-tag"/></svg><span><b>0</b> tags</span></a>
                    <button class="btn btn-goto">Go to file</button>
                    <button class="btn btn-add">Add file<span class="caret caret-dark"></span></button>
                    <button class="btn btn-code"><svg class="ic"><use href="#i-code"/></svg><span>Code</span><span class="caret caret-white"></span><span class="dot"></span></button>
                </div>

                <div class="box">
                    <div class="commit-row">
                        <span class="avatar avatar-commit"><svg class="identicon"><use href="#i-ident"/></svg></span>
                        <span class="commit-msg"><strong>hannah-hana-kim</strong> Initial commit</span>
                        <span class="hash">b041264</span>
                        <span class="muted when">now</span>
                        <a class="meta meta-commits"><svg class="ic"><use href="#i-history"/></svg><span><b>1</b> commit</span></a>
                    </div>
                    <div class="file-row">
                        <svg class="ic ic-muted"><use href="#i-file"/></svg>
                        <span class="file-name">README.md</span>
                        <span class="muted file-msg">Initial commit</span>
                        <span class="muted">now</span>
                    </div>
                </div>

                <div class="box readme">
                    <div class="readme-head">
                        <strong>README.md</strong>
                        <svg class="ic ic-muted"><use href="#i-pencil"/></svg>
                    </div>
                    <article class="readme-body">
                        <h1>5000-lab-1.2</h1>
                        <p>This is a repository for DSAN 5000 Lab 1.2</p>
                    </article>
                </div>
            </main>

            <aside class="side">
                <div class="about-head">
                    <h2>About</h2>
                    <svg class="ic ic-muted about-gear"><use href="#i-gear"/></svg>
                </div>
                <p class="about-text">This is a repository for DSAN 5000 Lab 1.2</p>
                <ul class="stats">
                    <li><svg class="ic"><use href="#i-book"/></svg>Readme</li>
                    <li><svg class="ic"><use href="#i-pulse"/></svg>Activity</li>
                    <li><svg class="ic"><use href="#i-star"/></svg><span><b>0</b> stars</span></li>
                    <li><svg class="ic"><use href="#i-eye"/></svg><span><b>1</b> watching</span></li>
                    <li><svg class="ic"><use href="#i-fork"/></svg><span><b>0</b> forks</span></li>
                </ul>
                <section class="side-sec">
                    <h2>Releases</h2>
                    <p class="side-note">No releases published</p>
                    <a class="side-link">Create a new release</a>
                </section>
                <section class="side-sec">
                    <h2>Packages</h2>
                    <p class="side-note">No packages published</p>
                    <a class="side-link">Publish your first package</a>
                </section>
            </aside>
        </div>
    </div>

    <footer class="foot">
        <div class="foot-left">
            <svg class="ic foot-logo"><use href="#i-mark"/></svg>
            <span>© 2023 GitHub, Inc.</span>
        </div>
        <nav class="foot-links">
            <a>Terms</a><a>Privacy</a><a>Security</a><a>Status</a><a>Docs</a><a>Contact GitHub</a><a>Pricing</a><a>API</a><a>Training</a><a>Blog</a><a>About</a>
        </nav>
    </footer>
</body>
</html>
```

FILE: styles.css
```css
* {
    box-sizing: border-box;
}
html, body {
    margin: 0;
    height: 1800px;
    overflow: hidden;
}
body {
    font-family: Inter, "Noto Sans", Arial, sans-serif;
    font-size: 28px;
    letter-spacing: -0.012em;
    color: #1f2328;
    background: #fff;
}
h1, h2, p, ul {
    margin: 0;
    padding: 0;
}
button {
    font: inherit;
    letter-spacing: inherit;
    color: inherit;
    cursor: pointer;
}
.sprite {
    display: none;
}
.ic {
    width: 32px;
    height: 32px;
    flex: none;
    fill: currentColor;
}
.ic-muted {
    color: #656d76;
}
.muted {
    color: #656d76;
}

/* browser chrome */
.tabstrip {
    height: 84px;
    background: #8aabe4;
    display: flex;
    align-items: flex-end;
    padding-left: 16px;
}
.tab {
    width: 480px;
    height: 68px;
    background: #cddbf5;
    border-radius: 16px 16px 0 0;
    display: flex;
    align-items: center;
    padding-left: 24px;
    color: #1f2023;
}
.tab-fav {
    color: #24292f;
}
.tab-title {
    width: 352px;
    margin-left: 16px;
    font-size: 24px;
    letter-spacing: 0.1px;
    white-space: nowrap;
    overflow: hidden;
    -webkit-mask-image: linear-gradient(to right, #000 88%, transparent);
    mask-image: linear-gradient(to right, #000 88%, transparent);
}
.tab-close {
    width: 16px;
    height: 16px;
    margin-left: 16px;
    stroke: #1f2023;
    stroke-width: 2.4;
    fill: none;
}
.tab-new {
    width: 24px;
    height: 24px;
    margin: 0 0 21px 32px;
    stroke: #1f2023;
    stroke-width: 3.4;
    fill: none;
}
.tab-list {
    width: 20px;
    height: 14px;
    margin: 0 34px 26px auto;
    stroke: #1f2023;
    stroke-width: 2.6;
    fill: none;
}
.toolbar {
    height: 76px;
    background: #cddbf5;
    display: flex;
    align-items: flex-start;
    padding: 8px 28px 0 28px;
}
.toolbar > .tool {
    margin: 18px 32px 0 0;
}
.tool {
    width: 32px;
    height: 32px;
    flex: none;
    color: #1f2023;
}
.tool-stroke {
    fill: none;
    stroke: currentColor;
    stroke-width: 3;
}
.tool-stroke .solid {
    fill: currentColor;
    stroke: none;
}
.tool-solid {
    fill: currentColor;
}
.tool-off {
    color: #7f8896;
}
.omnibox {
    width: 2256px;
    height: 68px;
    margin-left: -3px;
    background: #f5f8fe;
    border-radius: 34px;
    display: flex;
    align-items: center;
    padding-left: 25px;
}
.lock {
    width: 20px;
    height: 26px;
    flex: none;
}
.url {
    margin-left: 22px;
    font-size: 28px;
    letter-spacing: 0;
    color: #5f6368;
    white-space: nowrap;
}
.url-host {
    color: #1f2023;
}
.omni-icons {
    margin-left: auto;
    display: flex;
    align-items: center;
    gap: 34px;
    padding-right: 20px;
}
.omni-ic {
    width: 30px;
    height: 30px;
    flex: none;
}
.omni-star {
    color: #5f6368;
}
.tool-right {
    display: flex;
    align-items: center;
    gap: 32px;
    height: 68px;
    margin-left: 28px;
}
.profile {
    width: 44px;
    height: 44px;
    border-radius: 50%;
    background: #235a9c;
    color: #fff;
    font-size: 24px;
    display: flex;
    align-items: center;
    justify-content: center;
    margin: 0 -6px;
}
.bookmarks {
    height: 74px;
    background: #cddbf5;
    border-bottom: 2px solid #a9b6cf;
    display: grid;
    grid-template-columns: 164px 306px 304px 204px 220px 306px 217px 301px 298px 460px 1fr;
    align-items: center;
    padding: 8px 0 0 28px;
    font-size: 24px;
    letter-spacing: -0.1px;
    color: #1f2023;
}
.bm {
    display: flex;
    align-items: center;
    gap: 16px;
    white-space: nowrap;
}
.fav {
    width: 32px;
    height: 32px;
    flex: none;
}
.fav-gmail {
    width: 28px;
    margin-right: 2px;
}
.fav-globe {
    fill: #1f2023;
}
.g-badge {
    width: 32px;
    height: 32px;
    flex: none;
    border-radius: 50%;
    background: #fff;
    display: flex;
    align-items: center;
    justify-content: center;
}
.g-logo {
    width: 24px;
    height: 24px;
}
.gu {
    width: 32px;
    height: 32px;
    flex: none;
    background: #0b1f45;
    color: #fff;
    font-family: "Liberation Serif", serif;
    font-style: italic;
    font-size: 15px;
    letter-spacing: 0;
    display: flex;
    align-items: center;
    justify-content: center;
}
.bm-more {
    font-size: 28px;
    text-align: center;
    padding-right: 18px;
}

/* github header */
.app-header {
    height: 208px;
    background: #f6f8fa;
    border-bottom: 2px solid #d8dee4;
}
.head-row {
    height: 96px;
    padding: 32px 31px 0 32px;
    display: flex;
    align-items: center;
}
.icon-btn {
    width: 63px;
    height: 64px;
    flex: none;
    margin-right: 17px;
    padding: 0;
    background: #f6f8fa;
    border: 2px solid #d0d7de;
    border-radius: 12px;
    display: flex;
    align-items: center;
    justify-content: center;
}
.icon-btn-wide {
    width: 107px;
    gap: 18px;
    justify-content: flex-start;
    padding-left: 14px;
}
.icon-btn-menu {
    width: 64px;
    margin-right: 32px;
}
.head-logo {
    width: 64px;
    height: 64px;
    color: #1f2328;
}
.crumbs {
    margin-left: 32px;
    display: flex;
    align-items: center;
    white-space: nowrap;
}
.crumbs strong {
    font-weight: 600;
    letter-spacing: -0.1px;
}
.crumb-sep {
    margin: 0 15px;
    color: #656d76;
}
.search {
    width: 698px;
    height: 64px;
    margin-left: auto;
    border: 2px solid #d0d7de;
    border-radius: 12px;
    display: flex;
    align-items: center;
    padding-left: 15px;
    color: #656d76;
}
.search-text {
    margin-left: 14px;
    padding-top: 2px;
    white-space: nowrap;
}
.slash {
    display: inline-block;
    width: 24px;
    height: 32px;
    border: 2px solid #8c959f;
    border-radius: 6px;
    font: inherit;
    font-size: 22px;
    line-height: 28px;
    text-align: center;
    vertical-align: -3px;
}
.search-term {
    margin-left: auto;
    width: 60px;
    height: 32px;
    border-left: 2px solid #d8dee4;
    display: flex;
    justify-content: center;
}
.head-div {
    width: 2px;
    height: 40px;
    margin: 0 23px 0 27px;
    background: #d8dee4;
}
.avatar {
    border-radius: 50%;
    background: #f0f0f0;
    display: flex;
    align-items: center;
    justify-content: center;
    flex: none;
}
.identicon {
    width: 80%;
    height: 48%;
    fill: #b3d37a;
}
.avatar-head {
    width: 67px;
    height: 67px;
    border: 2px solid #d8dbd8;
    margin-left: -2px;
}
.tabs {
    height: 110px;
    padding: 32px 0 0 32px;
    display: flex;
    align-items: flex-start;
    gap: 20.6px;
}
.navtab {
    height: 62px;
    padding: 0 16px;
    display: flex;
    align-items: center;
    gap: 17px;
    position: relative;
    white-space: nowrap;
}
.navtab.active {
    font-weight: 600;
    gap: 15px;
    padding-right: 18px;
    margin-right: -4px;
}
.navtab.active::after {
    content: "";
    position: absolute;
    left: 0;
    right: 0;
    top: 74px;
    height: 6px;
    border-radius: 6px 6px 0 0;
    background: #ee8a70;
}

.caret {
    display: inline-block;
    width: 0;
    height: 0;
    flex: none;
    border-top: 8px solid #656d76;
    border-left: 8px solid transparent;
    border-right: 8px solid transparent;
}
.caret-dark {
    border-top-color: #57606a;
}
.caret-white {
    border-top-color: #fff;
}

/* repo */
.page {
    width: 2432px;
    margin-left: 224px;
}
.repo-head {
    height: 126px;
    padding-top: 32px;
    border-bottom: 2px solid #d0d7de;
    display: flex;
    align-items: flex-start;
}
.avatar-repo {
    width: 50px;
    height: 50px;
    border: 2px solid #dfe2df;
    margin: 4px 14px 0 0;
}
.repo-name {
    font-size: 40px;
    font-weight: 600;
    line-height: 56px;
    letter-spacing: -0.02em;
    padding-top: 3px;
}
.badge {
    height: 38px;
    margin: 11px 0 0 17px;
    padding: 0 14px;
    border: 2px solid #d0d7de;
    border-radius: 20px;
    font-size: 24px;
    font-weight: 500;
    line-height: 33px;
    color: #656d76;
}
.repo-actions {
    margin-left: auto;
    display: flex;
    gap: 18px;
}
.sbtn {
    height: 56px;
    padding: 0;
    background: #f6f8fa;
    border: 2px solid #d0d7de;
    border-radius: 12px;
    font-size: 24px;
    font-weight: 500;
    display: flex;
    align-items: center;
}
.sbtn-pin {
    width: 136px;
    padding-left: 24px;
    gap: 17px;
    margin-right: -1px;
}
.sbtn-watch {
    width: 271px;
    padding-left: 22px;
    gap: 7px;
}
.sbtn-watch .count {
    margin-left: 4px;
}
.sbtn-watch .caret {
    margin-left: 8px;
}
.count {
    min-width: 40px;
    height: 38px;
    padding: 0 8px;
    border-radius: 20px;
    background: #e4e7ea;
    font-size: 24px;
    line-height: 38px;
    text-align: center;
}
.split {
    display: flex;
}
.sbtn-main {
    border-radius: 12px 0 0 12px;
    padding-left: 24px;
    gap: 14px;
}
.sbtn-drop {
    width: 66px;
    margin-left: -2px;
    justify-content: center;
    border-radius: 0 12px 12px 0;
}
.split-fork .sbtn-main {
    width: 205px;
}
.split-star .sbtn-main {
    width: 208px;
    gap: 21px;
}
.split-star .sbtn-drop {
    width: 68px;
}
.split-star .count {
    margin-left: -6px;
}
.split-fork .count {
    margin-left: 1px;
}
.disabled {
    color: #8c959f;
}
.disabled .count {
    color: #8c959f;
}

.layout {
    padding-top: 48px;
    display: grid;
    grid-template-columns: 1792px 592px;
    gap: 48px;
}
.file-nav {
    height: 64px;
    display: flex;
    align-items: center;
}
.btn {
    height: 64px;
    padding: 0;
    background: #f6f8fa;
    border: 2px solid #d0d7de;
    border-radius: 12px;
    font-weight: 500;
    display: flex;
    align-items: center;
    justify-content: center;
    white-space: nowrap;
}
.btn-branch {
    width: 209px;
    gap: 15px;
}
.btn-branch .caret {
    margin-left: 2px;
}
.btn-goto {
    width: 188px;
    margin-left: auto;
}
.btn-add {
    width: 193px;
    margin-left: 16px;
    gap: 6px;
}
.btn-code {
    width: 202px;
    margin-left: 16px;
    gap: 16px;
    background: #45854a;
    border-color: #3f7d44;
    color: #fff;
    font-weight: 600;
    position: relative;
}
.dot {
    position: absolute;
    right: -6px;
    top: -9px;
    width: 16px;
    height: 16px;
    border-radius: 50%;
    background: #2563d9;
}
.meta {
    display: flex;
    align-items: center;
    gap: 8px;
    color: #656d76;
    white-space: nowrap;
}
.meta .ic {
    color: #1f2328;
}
.meta b {
    color: #1f2328;
    font-weight: 600;
}
.meta-branch {
    margin-left: 32px;
    letter-spacing: -0.1px;
}
.meta-tags {
    margin-left: 33px;
    letter-spacing: -0.1px;
}
.box {
    margin-top: 32px;
    border: 2px solid #d0d7de;
    border-radius: 12px;
    overflow: hidden;
}
.commit-row {
    height: 108px;
    background: #f6f8fa;
    border-bottom: 2px solid #d8dee4;
    padding: 0 33px 0 26px;
    display: flex;
    align-items: center;
}
.avatar-commit {
    width: 46px;
    height: 46px;
}
.commit-msg {
    margin-left: 24px;
    letter-spacing: -0.1px;
}
.commit-msg strong {
    font-weight: 600;
    letter-spacing: -0.2px;
}
.hash {
    margin-left: auto;
    font-family: "DejaVu Sans Mono", monospace;
    font-size: 24px;
    letter-spacing: 0;
    color: #656d76;
}
.when {
    margin-left: 15px;
}
.meta-commits {
    margin-left: 32px;
}
.file-row {
    height: 73px;
    padding: 0 33px 0 32px;
    display: flex;
    align-items: center;
    gap: 32px;
}
.file-name {
    width: 514px;
    margin-right: -32px;
}
.file-msg {
    margin-right: auto;
}
.readme-head {
    height: 108px;
    padding: 0 32px;
    display: flex;
    align-items: center;
    justify-content: space-between;
}
.readme-head strong {
    font-weight: 600;
}
.readme-head .ic {
    margin-right: 16px;
}
.readme-body {
    padding: 0 64px;
    height: 275px;
}
.readme-body h1 {
    font-size: 64px;
    font-weight: 600;
    line-height: 80px;
    letter-spacing: -0.02em;
    padding: 32px 0 19px;
    border-bottom: 2px solid #d8dee4;
}
.readme-body p {
    margin-top: 32px;
    font-size: 32px;
    line-height: 48px;
    letter-spacing: -0.7px;
}

/* sidebar */
.about-head {
    padding-top: 2px;
    display: flex;
    align-items: center;
    justify-content: space-between;
}
.about-gear {
    margin-top: -3px;
}
.side h2 {
    font-size: 32px;
    font-weight: 600;
    line-height: 48px;
}
.about-text {
    margin-top: 32px;
    font-size: 32px;
    line-height: 48px;
    letter-spacing: -0.7px;
}
.stats {
    list-style: none;
    margin-top: 22px;
    padding-bottom: 40px;
    border-bottom: 2px solid #d8dee4;
}
.stats li {
    height: 58px;
    display: flex;
    align-items: center;
    gap: 24px;
    color: #656d76;
}
.stats b {
    font-weight: 600;
}
.side-sec {
    padding-top: 49px;
}
.side-sec + .side-sec {
    margin-top: 49px;
    border-top: 2px solid #d8dee4;
}
.side-note {
    margin-top: 31px;
    font-size: 24px;
    line-height: 36px;
    letter-spacing: -0.1px;
    color: #656d76;
}
.side-link {
    display: block;
    font-size: 24px;
    line-height: 36px;
    letter-spacing: -0.1px;
    color: #2563d9;
}

/* footer */
.foot {
    width: 2498px;
    margin: 79px 0 0 191px;
    border-top: 2px solid #d8dee4;
    padding-top: 81px;
    display: flex;
    font-size: 24px;
    line-height: 54px;
    letter-spacing: -0.05px;
}
.foot-left {
    width: 417px;
    display: flex;
    align-items: flex-start;
    gap: 16px;
    color: #656d76;
}
.foot-logo {
    width: 48px;
    height: 48px;
    color: #6e7781;
}
.foot-links {
    display: flex;
    gap: 79px;
    letter-spacing: -0.1px;
    color: #2563d9;
    white-space: nowrap;
}
```
